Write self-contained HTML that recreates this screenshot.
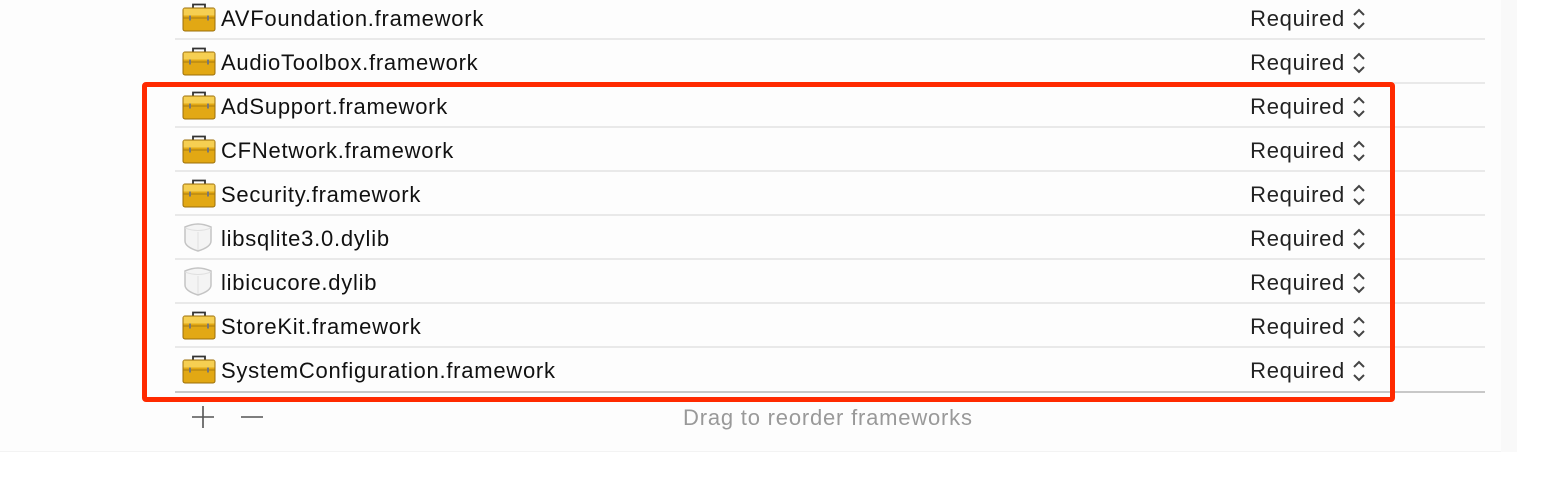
<!DOCTYPE html><html><head><style>
body{margin:0;width:1558px;height:494px;background:#fff;position:relative;overflow:hidden;font-family:"Liberation Sans",sans-serif}
.panel{position:absolute;left:0;top:0;width:1501px;height:451px;background:#fdfdfd;border-bottom:1px solid #f3f3f3}
.side{position:absolute;left:1501px;top:0;width:16px;height:452px;background:#f9f9f9}
.sep{position:absolute;left:175px;width:1310px;height:2px;background:#e9e9e9}
.row{position:absolute;left:0;width:1500px;height:44px}
.ic{position:absolute;left:182px;top:6px}
.nm{position:absolute;left:221px;top:10px;font-size:22px;letter-spacing:0.75px;color:#111}
.rq{position:absolute;right:155px;top:10px;font-size:22px;letter-spacing:0.7px;color:#222}
.ch{position:absolute;left:1352px;top:12px}
.red{position:absolute;left:142px;top:82px;width:1243px;height:310px;border:5px solid #ff2a00;border-radius:4px}
</style></head><body>
<div class="panel"></div><div class="side"></div>
<svg width="0" height="0" style="position:absolute"><defs>
<g id="box"><path d="M11 6V2.5h12V6" fill="none" stroke="#333" stroke-width="1.8"/><rect x="1" y="6" width="32" height="23" rx="2" fill="#e2a814" stroke="#9a6e0a"/><rect x="1.5" y="6.5" width="31" height="7" fill="#f6cf52"/><line x1="1" y1="16" x2="33" y2="16" stroke="#a77a10"/><rect x="7" y="13.5" width="2" height="5" fill="#777"/><rect x="25" y="13.5" width="2" height="5" fill="#777"/></g>
<g id="lib"><path d="M16 2Q22 2 29 5V19Q29 25 16 29Q3 25 3 19V5Q10 2 16 2Z" fill="#f4f4f4" stroke="#c4c4c4" stroke-width="1.5"/><path d="M3 6Q16 11 29 6M16 10V28" fill="none" stroke="#e0e0e0"/></g>
<g id="chev"><path d="M2 7L7 2L12 7M2 15L7 20L12 15" fill="none" stroke="#444" stroke-width="2"/></g>
</defs></svg>
<div class="sep" style="top:38px"></div><div class="sep" style="top:82px"></div><div class="sep" style="top:126px"></div><div class="sep" style="top:170px"></div><div class="sep" style="top:214px"></div><div class="sep" style="top:258px"></div><div class="sep" style="top:302px"></div><div class="sep" style="top:346px"></div>
<div class="sep" style="top:391px;background:#c8c8c8"></div>
<div class="row" style="top:-4px"><svg class="ic" width="35" height="31"><use href="#box"/></svg><div class="nm">AVFoundation.framework</div><div class="rq">Required</div><svg class="ch" width="14" height="22"><use href="#chev"/></svg></div>
<div class="row" style="top:40px"><svg class="ic" width="35" height="31"><use href="#box"/></svg><div class="nm">AudioToolbox.framework</div><div class="rq">Required</div><svg class="ch" width="14" height="22"><use href="#chev"/></svg></div>
<div class="row" style="top:84px"><svg class="ic" width="35" height="31"><use href="#box"/></svg><div class="nm">AdSupport.framework</div><div class="rq">Required</div><svg class="ch" width="14" height="22"><use href="#chev"/></svg></div>
<div class="row" style="top:128px"><svg class="ic" width="35" height="31"><use href="#box"/></svg><div class="nm">CFNetwork.framework</div><div class="rq">Required</div><svg class="ch" width="14" height="22"><use href="#chev"/></svg></div>
<div class="row" style="top:172px"><svg class="ic" width="35" height="31"><use href="#box"/></svg><div class="nm">Security.framework</div><div class="rq">Required</div><svg class="ch" width="14" height="22"><use href="#chev"/></svg></div>
<div class="row" style="top:216px"><svg class="ic" width="33" height="31"><use href="#lib"/></svg><div class="nm">libsqlite3.0.dylib</div><div class="rq">Required</div><svg class="ch" width="14" height="22"><use href="#chev"/></svg></div>
<div class="row" style="top:260px"><svg class="ic" width="33" height="31"><use href="#lib"/></svg><div class="nm">libicucore.dylib</div><div class="rq">Required</div><svg class="ch" width="14" height="22"><use href="#chev"/></svg></div>
<div class="row" style="top:304px"><svg class="ic" width="35" height="31"><use href="#box"/></svg><div class="nm">StoreKit.framework</div><div class="rq">Required</div><svg class="ch" width="14" height="22"><use href="#chev"/></svg></div>
<div class="row" style="top:348px"><svg class="ic" width="35" height="31"><use href="#box"/></svg><div class="nm">SystemConfiguration.framework</div><div class="rq">Required</div><svg class="ch" width="14" height="22"><use href="#chev"/></svg></div>
<div class="red"></div>
<svg style="position:absolute;left:190px;top:405px" width="80" height="24"><path d="M2 12H24M13 1V23" stroke="#555" stroke-width="1.6"/><path d="M51 12H73" stroke="#555" stroke-width="1.6"/></svg>
<div style="position:absolute;left:683px;top:405px;font-size:22px;letter-spacing:0.8px;color:#999">Drag to reorder frameworks</div>
</body></html>
